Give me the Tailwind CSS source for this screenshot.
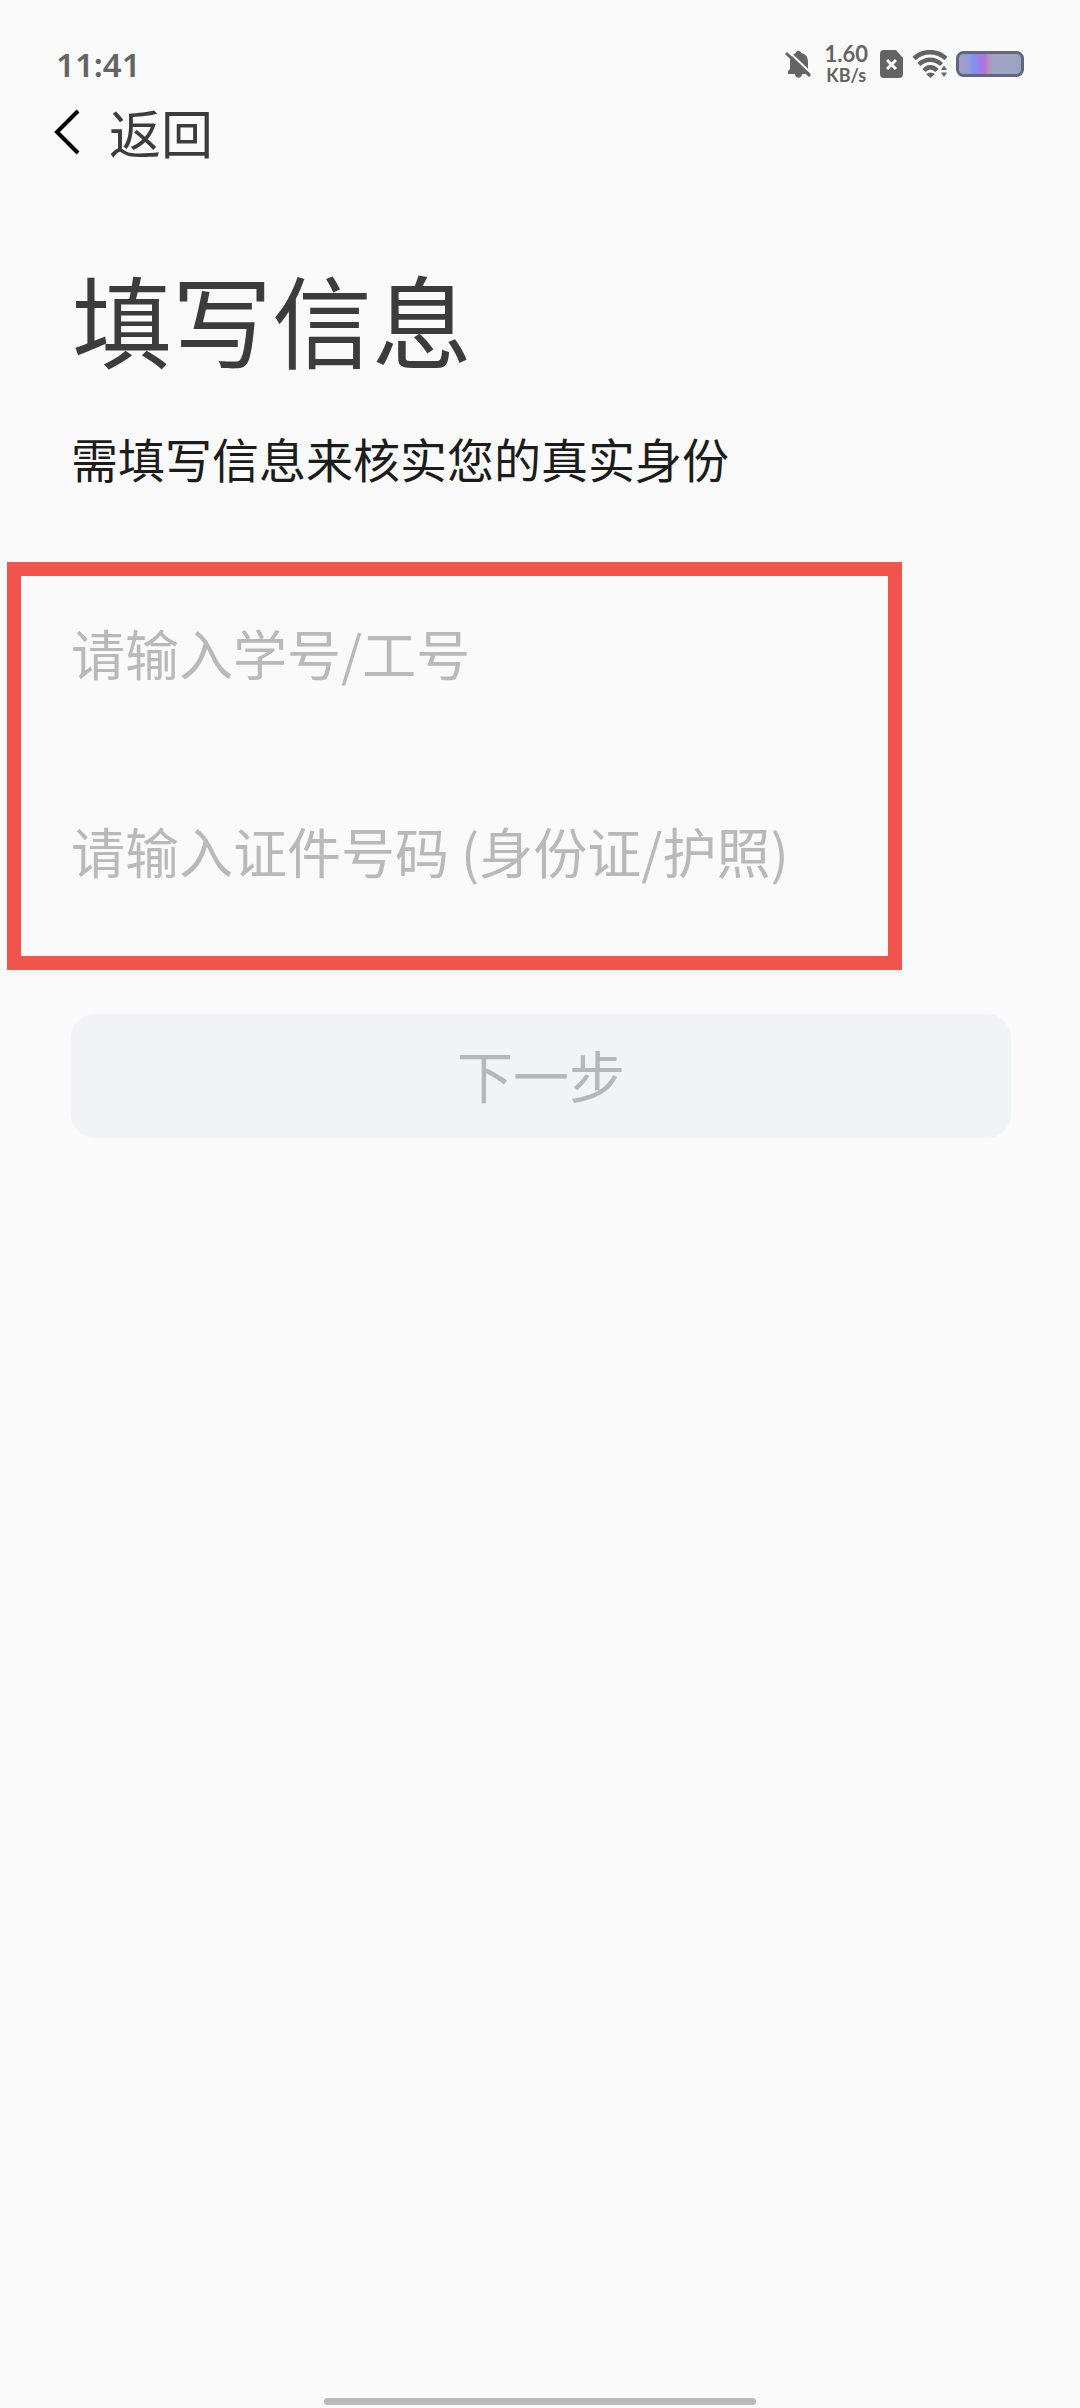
<!DOCTYPE html>
<html lang="zh-CN">
<head>
    <meta charset="UTF-8">
    <meta name="viewport" content="width=device-width, initial-scale=1.0">
    <title>填写信息</title>
    <script src="https://cdn.jsdelivr.net/npm/@tailwindcss/browser@4"></script>
</head>
<body class="min-h-screen flex flex-col bg-[#fafafa] text-[#3c3c3c] font-['Noto_Sans_CJK_SC',sans-serif]">
    <!-- Status bar -->
    <div class="h-24 pt-8 pl-14 pr-14 flex items-center justify-between text-[#646464] font-['Noto_Sans',sans-serif] font-semibold">
        <span class="text-[33px] leading-none">11:41</span>
        <div class="flex items-center">
            <svg class="w-7 h-8 mr-3" viewBox="0 0 28 32" fill="none">
                <path d="M4 25V23L6 21V14C6 9 9 6 12 5C12 2 17 2 17 5C22 6 24 9 24 14V21L26 24V26H18C18 31 11 31 11 26H4Z" fill="#646464"/>
                <path d="M4 3L28 26" stroke="#fafafa" stroke-width="2"/>
                <path d="M2 5L26 28" stroke="#646464" stroke-width="3"/>
            </svg>
            <div class="flex flex-col items-center mr-3 font-['Lato',sans-serif] font-bold">
                <span class="text-[22px] leading-[22px]">1.60</span>
                <span class="text-[18px] leading-5">KB/s</span>
            </div>
            <svg class="w-6 h-7 mr-2" viewBox="0 0 24 28" fill="none">
                <path d="M4 0H16L23 8V24Q23 28 19 28H4Q0 28 0 24V4Q0 0 4 0Z" fill="#646464"/>
                <path d="M7 10L16 19M16 10L7 19" stroke="#fafafa" stroke-width="3"/>
            </svg>
            <svg class="w-9 h-7 mr-2" viewBox="0 0 36 28" fill="none">
                <path d="M2 8.500C11 0 25 0 34 8.500" stroke="#646464" stroke-width="4.500"/>
                <path d="M7 14.500C13.500 8 23 8 29.500 14.500" stroke="#646464" stroke-width="4.500"/>
                <path d="M12 20.500C15.500 16 21 16 25 20.500" stroke="#646464" stroke-width="4.500"/>
                <path d="M14 24Q18.500 21 23 24L18.500 28Z" fill="#646464"/>
                <path d="M29 20L32 15.500L35 20ZM29 22.500H35L32 27Z" fill="#646464"/>
            </svg>
            <svg class="w-[68px] h-[26px]" viewBox="0 0 68 26">
                <defs>
                    <linearGradient id="charge">
                        <stop offset="0" stop-color="#9fa3c4"/>
                        <stop offset="0.17" stop-color="#979bd8"/>
                        <stop offset="0.24" stop-color="#858ff5"/>
                        <stop offset="0.3" stop-color="#8c86f0"/>
                        <stop offset="0.37" stop-color="#ae74e0"/>
                        <stop offset="0.42" stop-color="#a67ce0"/>
                        <stop offset="0.47" stop-color="#bd8bbd"/>
                        <stop offset="0.53" stop-color="#a0a2c3"/>
                        <stop offset="1" stop-color="#9ea2c0"/>
                    </linearGradient>
                </defs>
                <rect x="1.500" y="1.500" width="65" height="23" rx="6" fill="url(#charge)" stroke="#626780" stroke-width="3"/>
            </svg>
        </div>
    </div>

    <header class="h-[72px] pl-[53px] flex items-center">
        <a href="#" class="flex items-center gap-7 text-[52px] leading-none">
            <svg class="w-7 h-12" viewBox="0 0 28 48" fill="none">
                <path d="M25 3L4 24L25 45" stroke="#000" stroke-width="4"/>
            </svg>
            <span>返回</span>
        </a>
    </header>

    <main>
        <h1 class="mt-[90px] px-[72px] text-[100px] leading-[120px]">填写信息</h1>
        <p class="mt-[50px] px-[71px] text-[47px] leading-[60px] text-[#1c1c1c]">需填写信息来核实您的真实身份</p>

        <form>
            <div class="mt-[74px] ml-[7px] mr-[178px] pt-7 pb-[58px] pl-[50px] border-14 border-[#f0544d] flex flex-col gap-[102px]">
                <input type="text" id="userNo" aria-label="学号/工号" placeholder="请输入学号/工号"
                    class="w-full h-24 text-[54px] outline-none placeholder:text-[#b9b9b9]">
                <input type="text" id="idNo" aria-label="证件号码" placeholder="请输入证件号码 (身份证/护照)"
                    class="w-full h-24 text-[54px] outline-none placeholder:text-[#b9b9b9]">
            </div>
            <div class="mt-11 pl-[71px] pr-[69px]">
                <button type="submit" disabled class="w-full h-[124px] pb-1 rounded-3xl bg-[#f1f3f7] text-[56px] text-[#b7b7ba]">下一步</button>
            </div>
        </form>
    </main>

    <!-- Home indicator -->
    <div class="mt-auto mb-[3px] mx-auto w-2/5 h-[7px] rounded-full bg-[#bababa]"></div>
</body>
</html>
